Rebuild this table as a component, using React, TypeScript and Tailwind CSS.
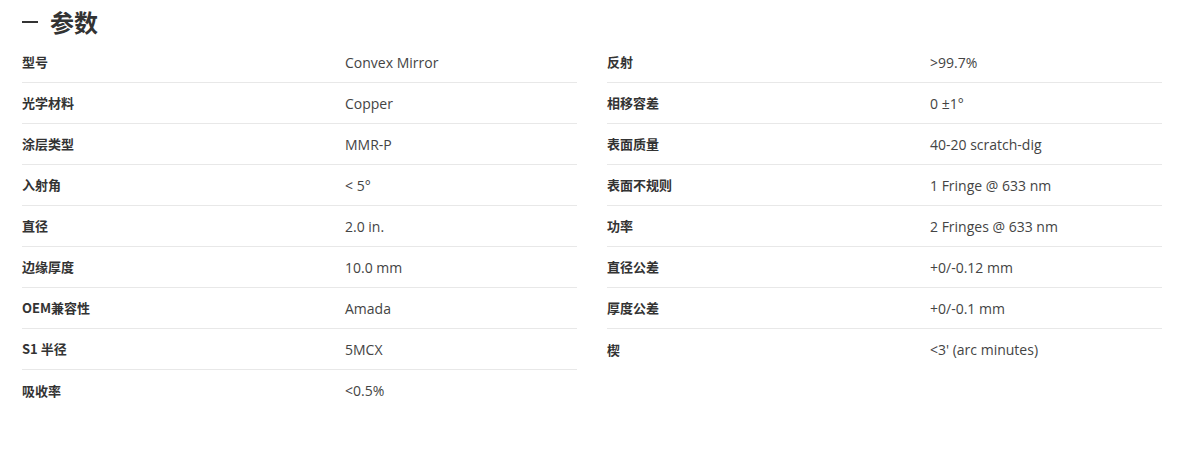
import { FC } from 'react';

type Row = { label: string; value: string };

const LEFT: Row[] = [
  { label: '型号', value: 'Convex Mirror' },
  { label: '光学材料', value: 'Copper' },
  { label: '涂层类型', value: 'MMR-P' },
  { label: '入射角', value: '< 5°' },
  { label: '直径', value: '2.0 in.' },
  { label: '边缘厚度', value: '10.0 mm' },
  { label: 'OEM兼容性', value: 'Amada' },
  { label: 'S1 半径', value: '5MCX' },
  { label: '吸收率', value: '<0.5%' },
];

const RIGHT: Row[] = [
  { label: '反射', value: '>99.7%' },
  { label: '相移容差', value: '0 ±1°' },
  { label: '表面质量', value: '40-20 scratch-dig' },
  { label: '表面不规则', value: '1 Fringe @ 633 nm' },
  { label: '功率', value: '2 Fringes @ 633 nm' },
  { label: '直径公差', value: '+0/-0.12 mm' },
  { label: '厚度公差', value: '+0/-0.1 mm' },
  { label: '楔', value: "<3' (arc minutes)" },
];

const SpecList: FC<{ rows: Row[] }> = ({ rows }) => (
  <div className="flex w-[555px] flex-col">
    {rows.map((row, i) => (
      <div
        key={row.label}
        className={
          i < rows.length - 1
            ? 'flex h-[41px] items-center border-b border-[#e8e8e8]'
            : 'flex h-[41px] items-center'
        }
      >
        <div className="w-[323px] shrink-0 font-['Noto_Sans_CJK_SC',sans-serif] text-[13px] font-bold text-[#333]">
          {row.label}
        </div>
        <div className="font-['Open_Sans','Noto_Sans_CJK_SC',sans-serif] text-[14px] text-[#444]">
          {row.value}
        </div>
      </div>
    ))}
  </div>
);

const App: FC = () => {
  return (
    <div className="min-h-[451px] w-[1182px] bg-white pl-[22px]">
      <h2 className="flex h-[42px] items-center gap-[12px] pt-[2px] font-['Noto_Sans_CJK_SC',sans-serif] text-[24px] font-bold text-[#333]">
        <span className="block h-[2px] w-[16px] bg-[#333]" />
        参数
      </h2>
      <section className="flex items-start gap-x-[30px]">
        <SpecList rows={LEFT} />
        <SpecList rows={RIGHT} />
      </section>
    </div>
  );
};

export default App;
